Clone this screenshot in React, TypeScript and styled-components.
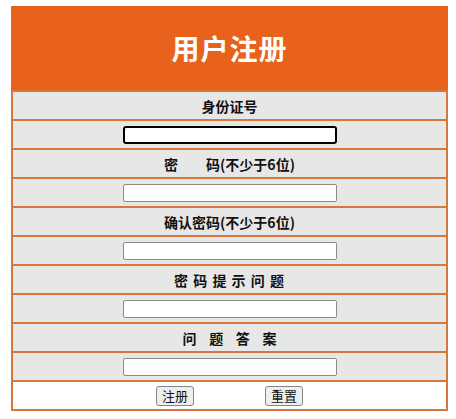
import React from "react";
import styled, { createGlobalStyle } from "styled-components";

const Global = createGlobalStyle`
  html, body { margin: 0; padding: 0; background: #ffffff; }
  body { font-family: "Noto Sans CJK SC", "Noto Sans", sans-serif; }
`;

const LINE = "#d6783d";

const Panel = styled.div`
  box-sizing: border-box;
  width: 437px;
  margin: 6px 0 0 11px;
  border-left: 2px solid ${LINE};
  border-right: 2px solid ${LINE};
  border-bottom: 2px solid ${LINE};
  display: flex;
  flex-direction: column;
`;

const Header = styled.div`
  height: 84px;
  margin: 0 -2px;
  background: #e8621b;
  color: #ffffff;
  display: flex;
  align-items: center;
  justify-content: center;
  font-size: 28px;
  font-weight: 700;
  letter-spacing: 1px;
`;

const Row = styled.div<{ $white?: boolean }>`
  height: 27px;
  border-top: 2px solid ${LINE};
  background: ${(p) => (p.$white ? "#ffffff" : "#e7e7e7")};
  display: flex;
  align-items: center;
  justify-content: center;
  gap: 71px;
`;

const Label = styled.span<{ $track?: number }>`
  font-size: 14px;
  font-weight: 700;
  color: #111111;
  white-space: pre;
  line-height: 1;
  letter-spacing: ${(p) => p.$track ?? 0}px;
`;

const Field = styled.input<{ $focus?: boolean }>`
  box-sizing: border-box;
  width: 214px;
  height: 18px;
  margin: 0;
  padding: 0 2px;
  background: #ffffff;
  border: ${(p) => (p.$focus ? "2px solid #000000" : "1px solid #8a8a8a")};
  border-radius: ${(p) => (p.$focus ? "3px" : "2px")};
  outline: none;
  font-size: 13px;
`;

const Btn = styled.button`
  box-sizing: border-box;
  height: 20px;
  padding: 0 5px;
  margin: 0;
  font-family: "Noto Sans CJK SC", sans-serif;
  font-size: 13px;
  line-height: 1;
  color: #111;
  background: #efefef;
  border: 1px solid #858585;
  border-radius: 3px;
`;

export default function App() {
  return (
    <>
      <Global />
      <Panel>
        <Header>用户注册</Header>
        <Row><Label>身份证号</Label></Row>
        <Row><Field $focus type="text" /></Row>
        <Row><Label>{"密\u3000\u3000码(不少于6位)"}</Label></Row>
        <Row><Field type="password" /></Row>
        <Row><Label>确认密码(不少于6位)</Label></Row>
        <Row><Field type="password" /></Row>
        <Row><Label $track={1}>{"密 码 提 示 问 题"}</Label></Row>
        <Row><Field type="text" /></Row>
        <Row><Label>{"问\u00a0\u00a0\u00a0\u00a0题\u00a0\u00a0\u00a0\u00a0答\u00a0\u00a0\u00a0\u00a0案"}</Label></Row>
        <Row><Field type="text" /></Row>
        <Row $white>
          <Btn type="submit">注册</Btn>
          <Btn type="reset">重置</Btn>
        </Row>
      </Panel>
    </>
  );
}
